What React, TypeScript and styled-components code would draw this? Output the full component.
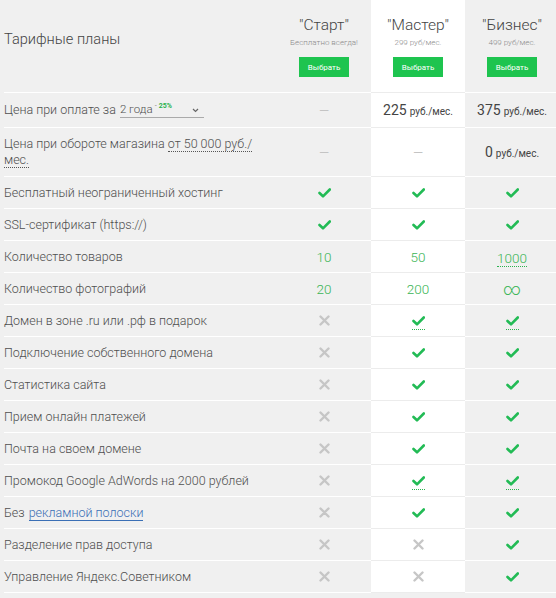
import React from "react";
import styled, { createGlobalStyle } from "styled-components";

const Global = createGlobalStyle`
  html, body { margin: 0; padding: 0; background: #f0f0f0; overflow: hidden; }
  body { font-family: Roboto, "Noto Sans", Arial, sans-serif; color: #555; }
`;

const Table = styled.div`
  width: 559px;
  display: flex;
  flex-direction: column;
`;

const Row = styled.div<{ $h: number }>`
  display: grid;
  grid-template-columns: 277px 94px 94px 94px;
  height: ${(p) => p.$h}px;
`;

const Cell = styled.div<{ $white?: boolean }>`
  background: ${(p) => (p.$white ? "#fff" : "#f0f0f0")};
  border-bottom: 1px solid ${(p) => (p.$white ? "#ececec" : "#fff")};
  display: flex;
  align-items: center;
  justify-content: center;
  box-sizing: border-box;
`;

const LabelCell = styled(Cell)`
  margin-left: 4px;
  justify-content: flex-start;
  font-size: 12.5px;
  font-weight: 300;
  line-height: 16px;
  color: #4f4f4f;
`;

const LabelText = styled.div`
  max-width: 256px;
`;

const Title = styled.div`
  font-size: 14.6px;
  color: #444;
  margin-top: -14px;
`;

const PlanCell = styled(Cell)`
  flex-direction: column;
  justify-content: flex-start;
  padding-top: 15px;
`;

const PlanName = styled.div`
  font-size: 15.5px;
  font-weight: 300;
  line-height: 20px;
  color: #444;
`;

const PlanSub = styled.div`
  font-size: 8px;
  font-weight: 300;
  line-height: 10px;
  color: #8a8a8a;
  margin-top: 3px;
`;

const ChooseButton = styled.button`
  margin-top: 9px;
  width: 50px;
  height: 20px;
  border: none;
  background: #1ec44f;
  color: #fff;
  font-family: Roboto, Arial, sans-serif;
  font-size: 8px;
  padding: 0;
`;

const Select = styled.span`
  display: inline-flex;
  align-items: flex-end;
  border-bottom: 1px solid #aaa;
  width: 84px;
  margin-left: 4px;
  font-size: 11.5px;
  line-height: 15px;
  position: relative;
`;

const Discount = styled.span`
  font-size: 7px;
  font-weight: 300;
  color: #444;
  margin-left: 2px;
  align-self: flex-start;
  line-height: 8px;
`;

const DiscountValue = styled.b`
  color: #2bb34f;
  font-weight: bold;
  margin-left: 2px;
`;

const Chevron = styled.span`
  position: absolute;
  right: 5px;
  bottom: 4px;
  display: flex;
`;

const Dotted = styled.span`
  border-bottom: 1px dotted #555;
`;

const Link = styled.a`
  color: #3a6fb5;
  text-decoration: none;
  border-bottom: 1px solid #3a6fb5;
  margin-left: 4px;
`;

const Dash = styled.span`
  color: #c4c4c4;
  font-size: 13px;
`;

const Price = styled.span`
  font-size: 14px;
  color: #444;
`;

const PriceUnit = styled.span`
  font-size: 10px;
  margin-left: 3px;
`;

const Num = styled.span<{ $dotted?: boolean }>`
  font-size: 13.5px;
  font-weight: 300;
  color: #3bb556;
  ${(p) => (p.$dotted ? "border-bottom: 1px dotted #2bb34f; line-height: 16px; margin-top: 4px;" : "")}
`;

const Infinity = styled.span`
  font-size: 17px;
  font-weight: 300;
  color: #3bb556;
  line-height: 16px;
`;

const IconWrap = styled.span<{ $dotted?: boolean }>`
  display: inline-flex;
  padding-bottom: ${(p) => (p.$dotted ? "3px" : "0")};
  margin-top: ${(p) => (p.$dotted ? "4px" : "0")};
  border-bottom: ${(p) => (p.$dotted ? "1px dotted #2bb34f" : "none")};
`;

const Check = ({ dotted }: { dotted?: boolean }) => (
  <IconWrap $dotted={dotted}>
    <svg width="13" height="10" viewBox="0 0 13 10">
      <path d="M1.5 5 L5 8.3 L11.8 1.5" fill="none" stroke="#22bb55" strokeWidth="2.6" strokeLinecap="round" strokeLinejoin="round" />
    </svg>
  </IconWrap>
);

const Cross = () => (
  <IconWrap>
    <svg width="11" height="11" viewBox="0 0 11 11">
      <path d="M1.5 1.5 L9.5 9.5 M9.5 1.5 L1.5 9.5" fill="none" stroke="#c6c6c6" strokeWidth="2.4" strokeLinecap="round" />
    </svg>
  </IconWrap>
);

type V = React.ReactNode;

const C = <Check />;
const CD = <Check dotted />;
const X = <Cross />;

const features: [V, V, V, V][] = [
  ["Бесплатный неограниченный хостинг", C, C, C],
  ["SSL-сертификат (https://)", C, C, C],
  ["Количество товаров", <Num>10</Num>, <Num>50</Num>, <Num $dotted>1000</Num>],
  ["Количество фотографий", <Num>20</Num>, <Num>200</Num>, <Infinity>∞</Infinity>],
  ["Домен в зоне .ru или .рф в подарок", X, CD, CD],
  ["Подключение собственного домена", X, C, C],
  ["Статистика сайта", X, C, C],
  ["Прием онлайн платежей", X, C, C],
  ["Почта на своем домене", X, C, C],
  ["Промокод Google AdWords на 2000 рублей", X, CD, CD],
  [<span>Без<Link>рекламной полоски</Link></span>, X, C, C],
  ["Разделение прав доступа", X, X, C],
  ["Управление Яндекс.Советником", X, X, C],
];

const plans = [
  { name: "\"Старт\"", sub: "Бесплатно всегда!" },
  { name: "\"Мастер\"", sub: "299 руб/мес." },
  { name: "\"Бизнес\"", sub: "499 руб/мес." },
];

export default function App() {
  return (
    <>
      <Global />
      <Table>
        <Row $h={93}>
          <LabelCell>
            <Title>Тарифные планы</Title>
          </LabelCell>
          {plans.map((p, i) => (
            <PlanCell key={i} $white={i === 1}>
              <PlanName>{p.name}</PlanName>
              <PlanSub>{p.sub}</PlanSub>
              <ChooseButton>Выбрать</ChooseButton>
            </PlanCell>
          ))}
        </Row>
        <Row $h={35}>
          <LabelCell>
            <span>Цена при оплате за</span>
            <Select>
              2 года<Discount>-<DiscountValue>25%</DiscountValue></Discount>
              <Chevron>
                <svg width="7" height="5" viewBox="0 0 7 5">
                  <path d="M1 1 L3.5 3.5 L6 1" fill="none" stroke="#666" strokeWidth="1.2" />
                </svg>
              </Chevron>
            </Select>
          </LabelCell>
          <Cell><Dash>—</Dash></Cell>
          <Cell $white><Price>225<PriceUnit>руб./мес.</PriceUnit></Price></Cell>
          <Cell><Price>375<PriceUnit>руб./мес.</PriceUnit></Price></Cell>
        </Row>
        <Row $h={49}>
          <LabelCell>
            <LabelText>
              Цена при обороте магазина <Dotted>от 50 000 руб./ мес.</Dotted>
            </LabelText>
          </LabelCell>
          <Cell><Dash>—</Dash></Cell>
          <Cell $white><Dash>—</Dash></Cell>
          <Cell><Price>0<PriceUnit>руб./мес.</PriceUnit></Price></Cell>
        </Row>
        {features.map((f, i) => (
          <Row $h={32} key={i}>
            <LabelCell>{f[0]}</LabelCell>
            <Cell>{f[1]}</Cell>
            <Cell $white>{f[2]}</Cell>
            <Cell>{f[3]}</Cell>
          </Row>
        ))}
      </Table>
    </>
  );
}
